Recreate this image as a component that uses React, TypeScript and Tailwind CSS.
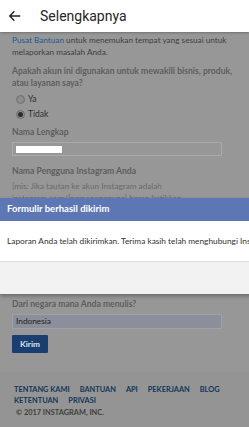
const Radio = ({ checked, label }: { checked?: boolean; label: string }) => (
  <div className="flex items-center gap-[3px] h-[15px] pl-[4px]">
    <span className="w-[9px] h-[9px] rounded-full border border-[#6f6f6f] bg-[#8c8c8c] flex items-center justify-center">
      {checked && <span className="w-[5px] h-[5px] rounded-full bg-[#2b2b2b]" />}
    </span>
    <span className="text-[8.5px] text-[#2f2f2f]">{label}</span>
  </div>
);

const App = () => {
  const links = ["TENTANG KAMI", "BANTUAN", "API", "PEKERJAAN", "BLOG", "KETENTUAN", "PRIVASI"];

  return (
    <div
      className="relative w-[249px] h-[427px] overflow-hidden bg-[#979797]"
      style={{ fontFamily: "Lato, 'Liberation Sans', sans-serif" }}
    >
      <div className="h-[32px] bg-white flex items-center shadow-[0_1px_2px_rgba(0,0,0,0.25)] relative z-10">
        <svg className="ml-[8px]" width="14" height="14" viewBox="0 0 24 24" fill="none" stroke="#262626" strokeWidth="2.4">
          <path d="M21 12H4M11 4l-8 8 8 8" />
        </svg>
        <span className="ml-[18px] text-[14px] text-[#262626]" style={{ fontFamily: "Roboto, sans-serif" }}>
          Selengkapnya
        </span>
      </div>

      <div className="px-[12px] pt-[2px]">
        <p className="text-[8.2px] leading-[12px] text-[#404040]">
          <span className="text-[#24598f]">Pusat Bantuan</span> untuk menemukan tempat yang sesuai untuk melaporkan masalah Anda.
        </p>
        <p className="mt-[7px] text-[8.6px] leading-[12px] font-bold text-[#5e5e5e]">
          Apakah akun ini digunakan untuk mewakili bisnis, produk, atau layanan saya?
        </p>
        <div className="mt-[3px]">
          <Radio label="Ya" />
          <Radio checked label="Tidak" />
        </div>
        <p className="mt-[4px] text-[8.6px] leading-[12px] font-bold text-[#5e5e5e]">Nama Lengkap</p>
        <div className="mt-[4px] w-[210px] h-[14px] border border-[#aaaaaa] flex items-center pl-[3px]">
          <span className="w-[46px] h-[7px] bg-white" />
        </div>
        <p className="mt-[9px] text-[8.6px] leading-[12px] font-bold text-[#5e5e5e]">Nama Pengguna Instagram Anda</p>
        <p className="mt-[3px] text-[8.2px] leading-[12px] text-[#6a6a6a]">
          [mis: Jika tautan ke akun Instagram adalah instagram.com/[namapengguna] harap ketikkan
        </p>
      </div>

      <div className="absolute left-0 top-[198px] w-[320px] shadow-[0_2px_4px_rgba(0,0,0,0.3)]">
        <div className="h-[23px] bg-[#5d77b5] flex items-center pl-[7px] text-[9.5px] font-bold text-white">
          Formulir berhasil dikirim
        </div>
        <div className="h-[41px] bg-white flex items-center pl-[7px] text-[8.3px] text-[#333] whitespace-nowrap border-b border-[#dddddd]">
          Laporan Anda telah dikirimkan. Terima kasih telah menghubungi Instagram.
        </div>
        <div className="h-[32px] bg-[#f2f2f2]" />
      </div>

      <div className="absolute left-0 top-[298px] w-full px-[12px]">
        <p className="text-[8.6px] leading-[12px] font-bold text-[#5e5e5e]">Dari negara mana Anda menulis?</p>
        <div className="mt-[4px] w-[210px] h-[15px] border border-[#a0a0a8] bg-[#8b8e9b] flex items-center pl-[3px] text-[8.3px] text-[#222]">
          Indonesia
        </div>
        <button className="mt-[1px] w-[36px] h-[18px] bg-[#1b3e70] text-[8.3px] font-bold text-[#dde3ee] rounded-[1px]">
          Kirim
        </button>
      </div>

      <div className="absolute left-0 top-[372px] w-full h-[55px] bg-[#949494] px-[14px] pt-[12px]">
        <div className="flex flex-wrap w-[225px] gap-x-[10px] text-[7.4px] leading-[11px] font-bold text-[#123659]">
          {links.map((l) => (
            <span key={l}>{l}</span>
          ))}
        </div>
        <p className="mt-[1px] ml-[2px] text-[7.4px] leading-[11px] font-bold text-[#3e3e3e]">© 2017 INSTAGRAM, INC.</p>
      </div>
    </div>
  );
};

export default App;
